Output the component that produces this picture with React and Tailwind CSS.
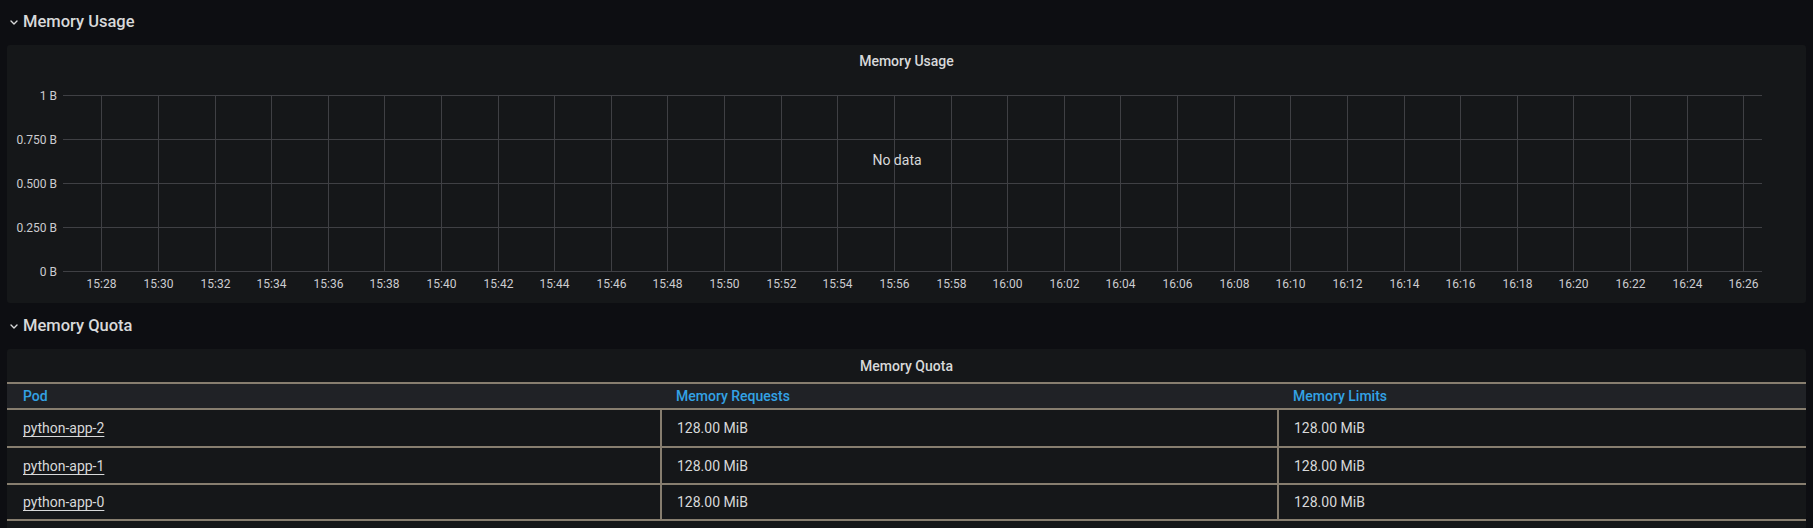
import React from 'react';

// time axis: 15:28 .. 16:26, one label every 2 minutes
const TICKS = Array.from({ length: 30 }, (_, i) => {
  const m = 15 * 60 + 28 + i * 2;
  return `${Math.floor(m / 60)}:${String(m % 60).padStart(2, '0')}`;
});

const Y_LABELS = ['1 B', '0.750 B', '0.500 B', '0.250 B', '0 B'];

const PODS = ['python-app-2', 'python-app-1', 'python-app-0'];
const ROW_HEIGHTS = ['h-[38px]', 'h-[37px]', 'h-[36px]'];

function RowHeader({ title, className = '' }) {
  return (
    <div className={`flex items-center pl-[10px] gap-[5px] ${className}`}>
      <svg width="8" height="5" viewBox="0 0 8 5" className="shrink-0">
        <path d="M1 1 L4 4 L7 1" fill="none" stroke="#d8d9da" strokeWidth="1.4" strokeLinecap="round" strokeLinejoin="round" />
      </svg>
      <span className="text-[16.5px] font-medium text-[#d8d9da] leading-none">{title}</span>
    </div>
  );
}

function MemoryChart() {
  // grid geometry, in the svg's own coordinates
  const left = 56;
  const right = 1755;
  const top = 18;
  const step = 44;
  const bottom = top + step * 4;
  const xs = TICKS.map((_, i) => Math.round(94.3 + i * 56.62) + 0.5);

  return (
    <svg width="1800" height="226" className="block font-['Roboto',sans-serif]">
      {Y_LABELS.map((label, i) => (
        <g key={label}>
          <line x1={left} x2={right} y1={top + i * step + 0.5} y2={top + i * step + 0.5} stroke="#3f4044" strokeWidth="1" />
          <text x="50" y={top + i * step + 0.5} textAnchor="end" dominantBaseline="central" fontSize="12" fill="#ccccd0">
            {label}
          </text>
        </g>
      ))}
      {xs.map((x, i) => (
        <g key={TICKS[i]}>
          <line x1={x} x2={x} y1={top} y2={bottom} stroke="#3f4044" strokeWidth="1" />
          <text x={x} y="207" textAnchor="middle" dominantBaseline="central" fontSize="12" fill="#ccccd0">
            {TICKS[i]}
          </text>
        </g>
      ))}
      <text x="890" y="83" textAnchor="middle" dominantBaseline="central" fontSize="14" fill="#d8d9da">
        No data
      </text>
    </svg>
  );
}

export default function App() {
  return (
    <div className="min-h-screen bg-[#0d0e12] font-['Roboto',sans-serif] overflow-hidden">
      <RowHeader title="Memory Usage" className="h-[45px]" />

      <div className="mx-[7px] h-[258px] rounded-[3px] bg-[#151719]">
        <div className="h-8 flex items-center justify-center text-sm font-medium text-[#d8d9da]">
          Memory Usage
        </div>
        <MemoryChart />
      </div>

      <RowHeader title="Memory Quota" className="h-[46px]" />

      <div className="mx-[7px] rounded-[3px] bg-[#151719] pb-6">
        <div className="h-[33px] flex items-center justify-center text-sm font-medium text-[#d8d9da]">
          Memory Quota
        </div>

        <div className="text-sm text-[#d8d9da]">
          <div className="grid grid-cols-[653px_617px_1fr] h-[28px] bg-[#202226] border-y-2 border-[#877e6f]">
            {['Pod', 'Memory Requests', 'Memory Limits'].map(h => (
              <div key={h} className="pl-4 flex items-center font-medium text-[#33a2e5]">{h}</div>
            ))}
          </div>

          {PODS.map((pod, i) => (
            <div
              key={pod}
              className={`grid grid-cols-[653px_617px_1fr] border-b-2 border-[#877e6f] ${ROW_HEIGHTS[i]}`}
            >
              <div className="pl-4 flex items-center">
                <span className="underline underline-offset-[3px] decoration-[#d8d9da]">{pod}</span>
              </div>
              <div className="pl-[15px] flex items-center border-l-2 border-[#877e6f]">128.00 MiB</div>
              <div className="pl-[15px] flex items-center border-l-2 border-[#877e6f]">128.00 MiB</div>
            </div>
          ))}
        </div>
      </div>
    </div>
  );
}
